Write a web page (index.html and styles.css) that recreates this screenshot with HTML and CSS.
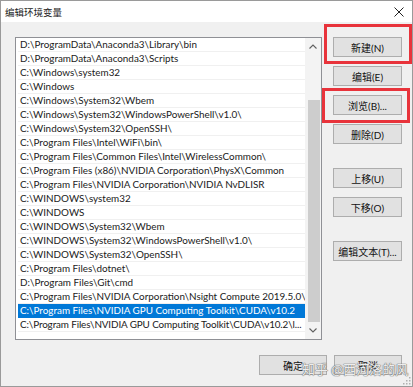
FILE: index.html
```html
<!DOCTYPE html>
<html lang="zh">
<head>
<meta charset="utf-8">
<title>编辑环境变量</title>
<link rel="stylesheet" href="styles.css">
</head>
<body>
<div class="window">
  <div class="titlebar">
    <span class="title">编辑环境变量</span>
    <svg class="close" width="10" height="10" viewBox="0 0 10 10"><path d="M0.5 0.5L9.5 9.5M9.5 0.5L0.5 9.5" stroke="#222" stroke-width="1" fill="none"/></svg>
  </div>
  <div class="content">
    <div class="main">
      <div class="listbox">
        <div class="rows">
          <div class="row">D:\ProgramData\Anaconda3\Library\bin</div>
          <div class="row">D:\ProgramData\Anaconda3\Scripts</div>
          <div class="row">C:\Windows\system32</div>
          <div class="row">C:\Windows</div>
          <div class="row">C:\Windows\System32\Wbem</div>
          <div class="row">C:\Windows\System32\WindowsPowerShell\v1.0\</div>
          <div class="row">C:\Windows\System32\OpenSSH\</div>
          <div class="row">C:\Program Files\Intel\WiFi\bin\</div>
          <div class="row">C:\Program Files\Common Files\Intel\WirelessCommon\</div>
          <div class="row">C:\Program Files (x86)\NVIDIA Corporation\PhysX\Common</div>
          <div class="row">C:\Program Files\NVIDIA Corporation\NVIDIA NvDLISR</div>
          <div class="row">C:\WINDOWS\system32</div>
          <div class="row">C:\WINDOWS</div>
          <div class="row">C:\WINDOWS\System32\Wbem</div>
          <div class="row">C:\WINDOWS\System32\WindowsPowerShell\v1.0\</div>
          <div class="row">C:\WINDOWS\System32\OpenSSH\</div>
          <div class="row">C:\Program Files\dotnet\</div>
          <div class="row">D:\Program Files\Git\cmd</div>
          <div class="row">C:\Program Files\NVIDIA Corporation\Nsight Compute 2019.5.0\</div>
          <div class="row selected">C:\Program Files\NVIDIA GPU Computing Toolkit\CUDA\v10.2</div>
          <div class="row tight">C:\Program Files\NVIDIA GPU Computing Toolkit\CUDA\v10.2\l...</div>
        </div>
        <div class="scrollbar">
          <div class="sb-btn"><svg width="8" height="5" viewBox="0 0 8 5"><path d="M0.5 4.5L4 1L7.5 4.5" stroke="#606060" stroke-width="1.1" fill="none"/></svg></div>
          <div class="track"><div class="thumb"></div></div>
          <div class="sb-btn"><svg width="8" height="5" viewBox="0 0 8 5"><path d="M0.5 0.5L4 4L7.5 0.5" stroke="#606060" stroke-width="1.1" fill="none"/></svg></div>
        </div>
      </div>
      <div class="side">
        <div class="btn">新建(N)</div>
        <div class="btn">编辑(E)</div>
        <div class="btn">浏览(B)...</div>
        <div class="btn">删除(D)</div>
        <div class="btn group">上移(U)</div>
        <div class="btn">下移(O)</div>
        <div class="btn group">编辑文本(T)...</div>
      </div>
    </div>
    <div class="footer">
      <div class="btn">确定</div>
      <div class="btn">取消</div>
    </div>
  </div>
  <div class="mark mark-new"></div>
  <div class="mark mark-browse"></div>
  <div class="watermark">知乎 @西河洛的风</div>
  <svg class="grip" width="8" height="8" viewBox="0 0 8 8">
    <rect x="6" y="0" width="1.5" height="1.5" fill="#b0b0b0"/>
    <rect x="3" y="3" width="1.5" height="1.5" fill="#b0b0b0"/>
    <rect x="6" y="3" width="1.5" height="1.5" fill="#b0b0b0"/>
    <rect x="0" y="6" width="1.5" height="1.5" fill="#b0b0b0"/>
    <rect x="3" y="6" width="1.5" height="1.5" fill="#b0b0b0"/>
    <rect x="6" y="6" width="1.5" height="1.5" fill="#b0b0b0"/>
  </svg>
</div>
</body>
</html>
```

FILE: styles.css
```css
* { box-sizing: border-box; }
html, body { margin: 0; padding: 0; background: #ffffff; }
body {
  font-family: "Lato", "Noto Sans CJK SC", sans-serif;
  font-size: 10px;
  color: #000;
}
.window {
  position: relative;
  width: 413px;
  height: 387px;
  border: 1px solid #9a9a9a;
  background: #f0f0f0;
  overflow: hidden;
}
.titlebar {
  height: 21px;
  background: #ffffff;
  display: flex;
  align-items: center;
  justify-content: space-between;
  padding: 0 8px 0 4px;
}
.title {
  font-family: "Noto Sans CJK SC", sans-serif;
  font-size: 9.5px;
  color: #222;
}
.close { display: block; }
.content {
  padding: 15px 0 0 14px;
}
.main {
  display: flex;
  gap: 11px;
}
.listbox {
  width: 307px;
  height: 303px;
  border: 1px solid #8f9095;
  background: #ffffff;
  display: flex;
}
.rows {
  flex: 1;
  padding-left: 2px;
  overflow: hidden;
}
.row {
  height: 14px;
  line-height: 13px;
  padding-left: 2px;
  white-space: nowrap;
  overflow: hidden;
  border-bottom: 1px solid #f0f0f0;
  color: #1a1a1a;
  font-size: 9.9px;
}
.row.tight { letter-spacing: -0.12px; }
.row.selected {
  background: #0078d7;
  color: #ffffff;
  border-bottom-color: #0078d7;
}
.scrollbar {
  width: 16px;
  display: flex;
  flex-direction: column;
  background: #f3f3f3;
}
.sb-btn {
  height: 17px;
  display: flex;
  align-items: center;
  justify-content: center;
}
.sb-btn svg { display: block; }
.track {
  flex: 1;
  padding: 45px 1px 0 3px;
  display: flex;
}
.thumb {
  flex: 1;
  background: #cdcdcd;
}
.side {
  width: 69px;
  display: flex;
  flex-direction: column;
  gap: 9px;
}
.btn {
  height: 20px;
  background: #e1e1e1;
  border: 1px solid #adadad;
  display: flex;
  align-items: center;
  justify-content: center;
  font-family: "Lato", "Noto Sans CJK SC", sans-serif;
  font-size: 10px;
  color: #111;
  white-space: nowrap;
}
.side .group { margin-top: 15px; }
.footer {
  display: flex;
  justify-content: flex-end;
  gap: 7px;
  margin-top: 15px;
  padding-right: 10px;
}
.footer .btn { width: 68px; }
.mark {
  position: absolute;
  border: 3px solid #e8333b;
}
.mark-new { left: 323px; top: 23px; width: 88px; height: 40px; }
.mark-browse { left: 321px; top: 87px; width: 88px; height: 35px; }
.watermark {
  position: absolute;
  left: 301px;
  top: 360px;
  font-family: "Noto Sans CJK SC", sans-serif;
  font-size: 13px;
  line-height: 16px;
  color: rgba(255, 255, 255, 0.9);
  text-shadow: 0 0 1px #707070, 0 0 1px #707070, 0 0 1px #707070;
  white-space: nowrap;
}
.grip {
  position: absolute;
  right: 1px;
  bottom: 1px;
}
```
